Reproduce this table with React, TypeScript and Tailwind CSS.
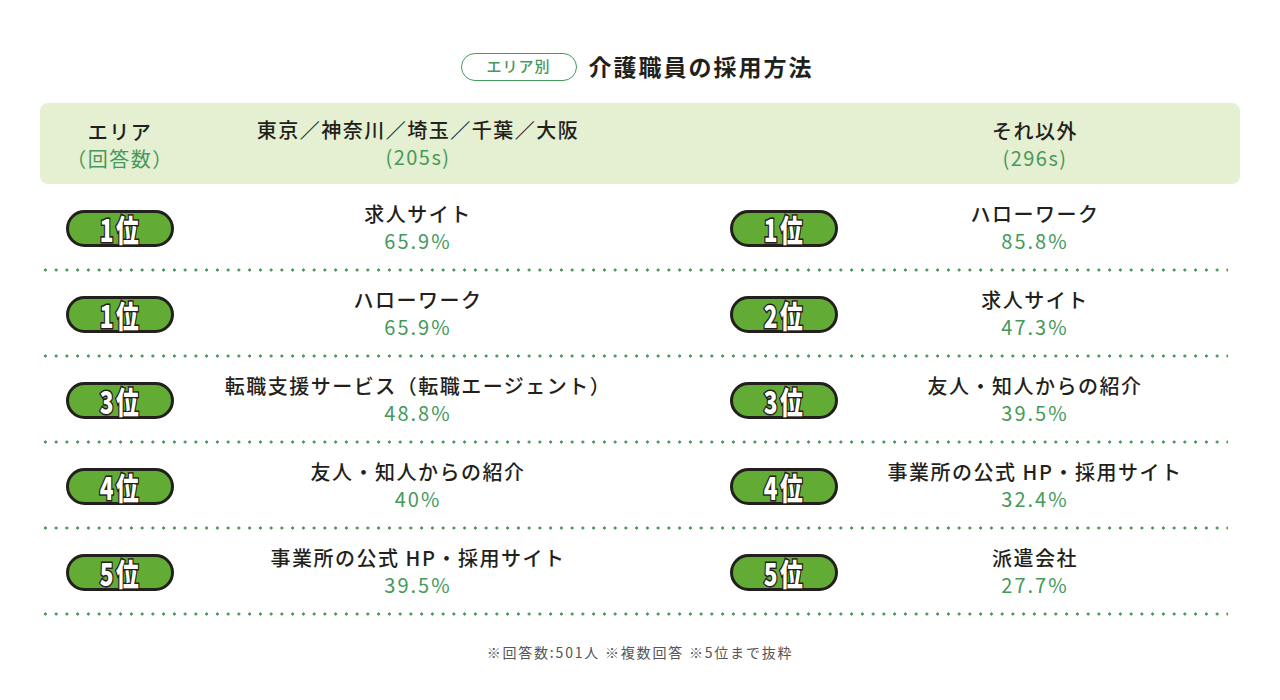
const leftRows = [
  {rank: '1位', label: '求人サイト', value: '65.9%'},
  {rank: '1位', label: 'ハローワーク', value: '65.9%'},
  {rank: '3位', label: '転職支援サービス（転職エージェント）', value: '48.8%'},
  {rank: '4位', label: '友人・知人からの紹介', value: '40%'},
  {rank: '5位', label: '事業所の公式 HP・採用サイト', value: '39.5%'},
];

const rightRows = [
  {rank: '1位', label: 'ハローワーク', value: '85.8%'},
  {rank: '2位', label: '求人サイト', value: '47.3%'},
  {rank: '3位', label: '友人・知人からの紹介', value: '39.5%'},
  {rank: '4位', label: '事業所の公式 HP・採用サイト', value: '32.4%'},
  {rank: '5位', label: '派遣会社', value: '27.7%'},
];

const gridCols = 'grid grid-cols-[160px_436px_68px_160px_342px_34px]';

const RankBadge = ({rank}: {rank: string}) => (
  <div className="w-[108px] h-[37px] rounded-full bg-[#62ab35] border-[3px] border-[#231f1c] flex items-center justify-center">
    <span className="text-white text-[29px] font-black leading-none tracking-[3px] scale-x-[0.78] scale-y-[1.05] [-webkit-text-stroke:3px_#231f1c] [paint-order:stroke_fill]">
      {rank}
    </span>
  </div>
);

const Item = ({label, value}: {label: string; value: string}) => (
  <div className="flex flex-col items-center text-[20px] leading-[27px]">
    <p className="text-[#231f1c] font-medium tracking-[1.5px]">{label}</p>
    <p className="text-[#45995a] font-normal tracking-[2px]">{value}</p>
  </div>
);

const App = () => {
  return (
    <div className="w-[1280px] h-[700px] bg-white font-['Noto_Sans_CJK_JP','Noto_Sans',sans-serif] pt-[52px]">
      <div className="flex items-center justify-center gap-3 h-[29px] pr-[6px]">
        <span className="w-[116px] h-[28px] rounded-full border-[1.5px] border-[#45995a] text-[#45995a] text-[15px] font-medium tracking-[1px] flex items-center justify-center">
          エリア別
        </span>
        <h1 className="text-[23px] font-bold text-[#231f1c] tracking-[2px]">介護職員の採用方法</h1>
      </div>

      <div className="mx-[40px] mt-[22px] w-[1200px]">
        <div className={`${gridCols} h-[81px] rounded-[8px] bg-[#e5efd1] items-center text-[20px] leading-[27px]`}>
          <div className="flex flex-col items-center pt-[2px]">
            <p className="text-[#231f1c] font-medium tracking-[1.5px]">エリア</p>
            <p className="text-[#45995a] tracking-[1.5px]">（回答数）</p>
          </div>
          <div className="flex flex-col items-center mt-[-2px]">
            <p className="text-[#231f1c] font-medium tracking-[1.5px]">東京／神奈川／埼玉／千葉／大阪</p>
            <p className="text-[#45995a] tracking-[1.5px]">(205s)</p>
          </div>
          <div />
          <div />
          <div className="flex flex-col items-center">
            <p className="text-[#231f1c] font-medium tracking-[1.5px]">それ以外</p>
            <p className="text-[#45995a] tracking-[1.5px]">(296s)</p>
          </div>
          <div />
        </div>

        <div className="mt-[2px] w-[1188px]">
          {leftRows.map((row, i) => (
            <div key={i}>
              <div className={`${gridCols} h-[82px] items-center`}>
                <div className="flex justify-center pt-[3px]">
                  <RankBadge rank={row.rank} />
                </div>
                <Item label={row.label} value={row.value} />
                <div />
                <div className="flex justify-center pt-[3px]">
                  <RankBadge rank={rightRows[i].rank} />
                </div>
                <Item label={rightRows[i].label} value={rightRows[i].value} />
                <div />
              </div>
              <div className="h-[4px] bg-[radial-gradient(circle,#4f9a5c_1.4px,transparent_1.8px)] bg-[length:10.75px_4px] bg-repeat-x" />
            </div>
          ))}
        </div>
      </div>

      <p className="mt-[26px] text-center text-[14px] text-[#555] tracking-[1.8px]">
        ※回答数:501人 ※複数回答 ※5位まで抜粋
      </p>
    </div>
  );
};

export default App;
